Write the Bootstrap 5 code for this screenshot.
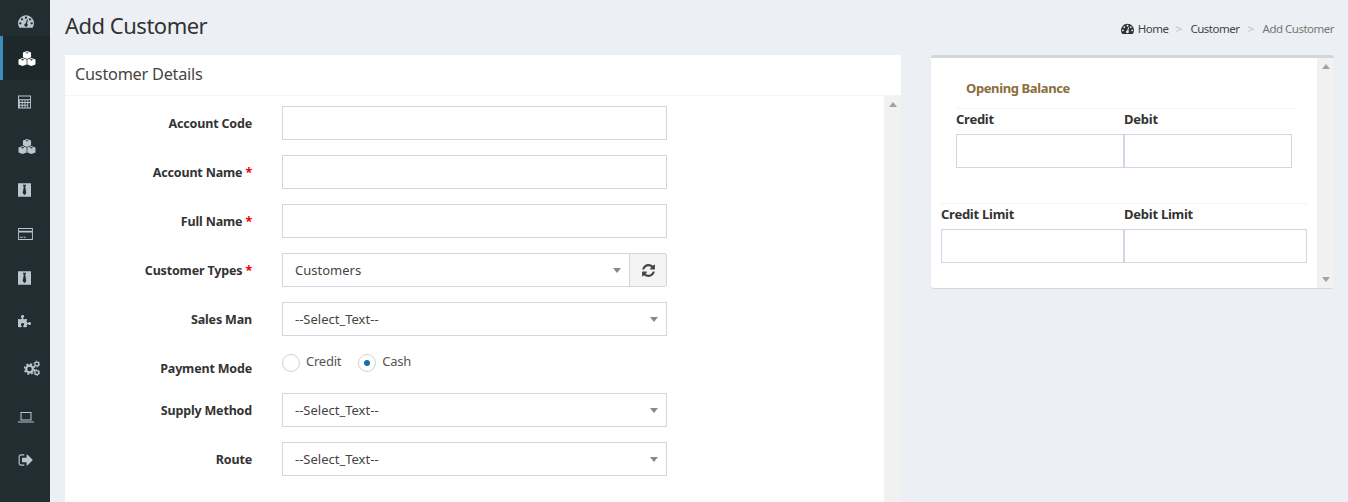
<!DOCTYPE html>
<html lang="en">
<head>
<meta charset="utf-8">
<title>Add Customer</title>
<link href="https://cdn.jsdelivr.net/npm/bootstrap@5.3.0/dist/css/bootstrap.min.css" rel="stylesheet">
<style>
html,body{height:502px;overflow:hidden}
body{background:#ecf0f5;color:#333;font-family:"Noto Sans","Liberation Sans",sans-serif;font-size:13px;letter-spacing:-.25px}
.side-rail{width:50px;height:502px;background:#222d32;flex:none}
.rail-item{height:44px;color:#b8c7ce;padding-left:15px;border-left:3px solid transparent}
.rail-item svg{width:16px;height:16px;fill:currentColor;display:block}
.rail-item svg.ic-cube{width:18px;height:15px}
.rail-item svg.ic-calc{width:13px;height:14px}
.rail-item svg.ic-tie{width:13px;height:14px}
.rail-item svg.ic-card{width:15px;height:12px}
.rail-item svg.ic-puz{width:14px;height:14px}
.rail-first{height:36px;padding-bottom:7px}
.rail-active{background:#1e282c;color:#fff;border-left-color:#3c8dbc}
.rail-cog{height:48px;padding-left:21px}
.rail-lap{height:46px;padding-top:3px}
.rail-out{height:44px}
.work-area{min-width:0;padding:0 14px 0 15px}
.head-bar{height:55px}
.page-title{font-size:22px;font-weight:400;margin:0;padding-bottom:5px;letter-spacing:-.5px}
.crumbs{margin:3px 0 0;font-size:11.5px;letter-spacing:-.5px;--bs-breadcrumb-divider:'>';--bs-breadcrumb-item-padding-x:7px;--bs-breadcrumb-margin-bottom:0}
.crumbs .breadcrumb-item+.breadcrumb-item::before{color:#bbb;padding-right:9px}
.crumbs .breadcrumb-item+.breadcrumb-item{padding-left:7px}
.crumbs .breadcrumb-item.active{color:#777;padding-left:8px}
.crumbs .breadcrumb-item{color:#444}
.crumbs svg{width:13px;height:13px;margin-right:4px;fill:#333;vertical-align:-2px}
.main-card{width:836px;height:447px;border:0;border-radius:3px 3px 0 0;background:#fff}
.main-head{height:41px;padding:0 10px;font-size:16.3px;color:#444;border-bottom:1px solid #f4f4f4;line-height:38px;background:#fff}
.main-body{height:406px}
.form-pane{flex:1;padding:10px 0 0}
.scroll-strip{width:17px;background:#f1f1f1;padding:6px 0;flex:none}
.tri-up{width:0;height:0;border:4px solid transparent;border-top:0;border-bottom:5px solid #a3a3a3}
.tri-down{width:0;height:0;border:4px solid transparent;border-bottom:0;border-top:5px solid #a3a3a3}
.field-line{height:34px;margin-bottom:15px}
.field-label{width:187px;text-align:right;font-weight:700;margin:0;padding-top:2px;font-size:12.5px;letter-spacing:-.17px;color:#333}
.field-label i{color:#e00;font-style:normal}
.field-box{width:385px;margin-left:30px}
.plain-input{height:34px;border:1px solid #d2d6e2;border-radius:0;padding:6px 12px;font-size:13px;box-shadow:none;letter-spacing:-.25px}
.plain-select{height:34px;border:1px solid #d2d6e2;border-radius:0;padding:0 12px;font-size:13px;color:#444;letter-spacing:0;background-image:none;line-height:32px;position:relative}
.plain-select::after{content:"";position:absolute;right:8px;top:14px;border:4.5px solid transparent;border-bottom:0;border-top:5px solid #888}
.refresh-btn{width:37px;height:34px;padding:0;border:1px solid #d2d6e2;border-left:0;background:#f4f4f4;border-radius:0 3px 3px 0}
.refresh-btn svg{width:15px;height:15px;fill:#444;display:block;margin:auto}
.pay-line{height:42px;margin-bottom:0}
.pay-line .field-label{padding-top:9px}
.pay-radios{gap:17px;margin-left:30px;height:42px}
.radio-item{display:flex;align-items:flex-start;gap:6px;margin:0;color:#555;line-height:20px}
.radio-dot{width:18px;height:18px;border:1px solid #d2d2d2;border-radius:50%;background:#fff;display:block;margin-top:3px;position:relative}
.radio-on::after{content:"";position:absolute;left:5px;top:5px;width:6px;height:6px;border-radius:50%;background:#1a6fa8}
.side-card{width:403px;height:233px;margin-left:30px;border:0;border-top:3px solid #d2d6de;border-radius:3px;background:#fff;box-shadow:0 1px 1px rgba(0,0,0,.1)}
.side-pane{flex:1;padding-top:20px}
.bal-title{color:#8a6d3b;font-weight:700;font-size:13px;letter-spacing:-.38px;padding:0 0 0 35px;height:30px;line-height:20px}
.rule-a{border-top:1px solid #f4f4f4;margin:0 23px 0 25px;height:26px;padding-top:0}
.rule-b{border-top:1px solid #f4f4f4;margin:35px 10px 0 10px;height:26px;padding-top:0}
.bal-head{font-weight:700;font-size:13px;line-height:20px;color:#333}
.w-168{width:168px}.w-183{width:183px}
.bal-inputs-a{margin-left:25px;width:336px}
.bal-inputs-b{margin-left:10px;width:366px}
</style>
</head>
<body>
<div class="d-flex">
  <nav class="side-rail d-flex flex-column">
    <div class="rail-item rail-first d-flex align-items-end"><svg viewBox="0 0 1792 1792"><use href="#ic-dash"/></svg></div>
    <div class="rail-item rail-active d-flex align-items-center"><svg class="ic-cube" viewBox="0 0 20 17"><use href="#ic-cubes"/></svg></div>
    <div class="rail-item d-flex align-items-center"><svg class="ic-calc" viewBox="1 1 14 14"><use href="#ic-calc"/></svg></div>
    <div class="rail-item d-flex align-items-center"><svg class="ic-cube" viewBox="0 0 20 17"><use href="#ic-cubes"/></svg></div>
    <div class="rail-item d-flex align-items-center"><svg class="ic-tie" viewBox="2 1 12 12.500"><use href="#ic-tie"/></svg></div>
    <div class="rail-item d-flex align-items-center"><svg class="ic-card" viewBox="0 1.500 16 13"><use href="#ic-card"/></svg></div>
    <div class="rail-item d-flex align-items-center"><svg class="ic-tie" viewBox="2 1 12 12.500"><use href="#ic-tie"/></svg></div>
    <div class="rail-item d-flex align-items-center"><svg class="ic-puz" viewBox="0 0 1792 1792"><use href="#ic-puzzle"/></svg></div>
    <div class="rail-item rail-cog d-flex align-items-center"><svg viewBox="0 0 16 16"><use href="#ic-cogs"/></svg></div>
    <div class="rail-item rail-lap d-flex align-items-center"><svg viewBox="0 0 16 16"><use href="#ic-lap"/></svg></div>
    <div class="rail-item rail-out d-flex align-items-center"><svg viewBox="0 0 1792 1792"><use href="#ic-out"/></svg></div>
  </nav>
  <div class="work-area flex-grow-1">
    <div class="head-bar d-flex justify-content-between align-items-center">
      <h1 class="page-title">Add Customer</h1>
      <ol class="breadcrumb crumbs">
        <li class="breadcrumb-item"><svg viewBox="0 0 1792 1792"><use href="#ic-dash"/></svg>Home</li>
        <li class="breadcrumb-item">Customer</li>
        <li class="breadcrumb-item active">Add Customer</li>
      </ol>
    </div>
    <div class="d-flex align-items-start">
      <div class="card main-card">
        <div class="main-head">Customer Details</div>
        <div class="main-body d-flex">
          <form class="form-pane">
            <div class="field-line d-flex align-items-center"><label class="field-label">Account Code</label><div class="field-box"><input class="form-control plain-input" type="text"></div></div>
            <div class="field-line d-flex align-items-center"><label class="field-label">Account Name <i>*</i></label><div class="field-box"><input class="form-control plain-input" type="text"></div></div>
            <div class="field-line d-flex align-items-center"><label class="field-label">Full Name <i>*</i></label><div class="field-box"><input class="form-control plain-input" type="text"></div></div>
            <div class="field-line d-flex align-items-center"><label class="field-label">Customer Types <i>*</i></label><div class="field-box d-flex"><div class="plain-select flex-grow-1">Customers</div><button type="button" class="refresh-btn"><svg viewBox="0 0 1792 1792"><use href="#ic-sync"/></svg></button></div></div>
            <div class="field-line d-flex align-items-center"><label class="field-label">Sales Man</label><div class="field-box"><div class="plain-select">--Select_Text--</div></div></div>
            <div class="field-line pay-line d-flex align-items-start"><label class="field-label">Payment Mode</label><div class="pay-radios d-flex align-items-start"><span class="radio-item"><span class="radio-dot"></span>Credit</span><span class="radio-item"><span class="radio-dot radio-on"></span>Cash</span></div></div>
            <div class="field-line d-flex align-items-center"><label class="field-label">Supply Method</label><div class="field-box"><div class="plain-select">--Select_Text--</div></div></div>
            <div class="field-line d-flex align-items-center"><label class="field-label">Route</label><div class="field-box"><div class="plain-select">--Select_Text--</div></div></div>
          </form>
          <div class="scroll-strip d-flex flex-column align-items-center"><span class="tri-up"></span></div>
        </div>
      </div>
      <div class="card side-card">
        <div class="d-flex h-100">
          <div class="side-pane">
            <div class="bal-title">Opening Balance</div>
            <div class="rule-a bal-head d-flex"><span class="w-168">Credit</span><span>Debit</span></div>
            <div class="d-flex bal-inputs-a"><input class="form-control plain-input w-50" type="text"><input class="form-control plain-input w-50" type="text"></div>
            <div class="rule-b bal-head d-flex"><span class="w-183">Credit Limit</span><span>Debit Limit</span></div>
            <div class="d-flex bal-inputs-b"><input class="form-control plain-input w-50" type="text"><input class="form-control plain-input w-50" type="text"></div>
          </div>
          <div class="scroll-strip d-flex flex-column align-items-center justify-content-between"><span class="tri-up"></span><span class="tri-down"></span></div>
        </div>
      </div>
    </div>
  </div>
</div>
<svg width="0" height="0" class="d-none">
  <defs>
    <path id="ic-dash" fill-rule="evenodd" d="M384 1152q0-53-37.5-90.5t-90.5-37.5-90.5 37.5-37.5 90.5 37.5 90.5 90.5 37.5 90.5-37.5 37.5-90.5zm192-448q0-53-37.5-90.5t-90.5-37.5-90.5 37.5-37.5 90.5 37.5 90.5 90.5 37.5 90.5-37.5 37.5-90.5zm428 481l101-382q6-26-7.5-48.5t-38.5-29.5-48 6.5-30 39.5l-101 382q-60 5-107 43.5t-63 98.5q-20 77 20 146t117 89 146-20 89-117q16-60-6-117t-72-91zm660-33q0-53-37.5-90.5t-90.5-37.5-90.5 37.5-37.5 90.5 37.5 90.5 90.5 37.5 90.5-37.5 37.5-90.5zm-640-640q0-53-37.5-90.5t-90.5-37.5-90.5 37.5-37.5 90.5 37.5 90.5 90.5 37.5 90.5-37.5 37.5-90.5zm448 192q0-53-37.5-90.5t-90.5-37.5-90.5 37.5-37.5 90.5 37.5 90.5 90.5 37.5 90.5-37.5 37.5-90.5zm320 448q0 261-141 483-19 29-54 29h-1402q-35 0-54-29-141-221-141-483 0-182 71-348t191-286 286-191 348-71 348 71 286 191 191 286 71 348z"/>
    <path id="ic-sync" d="M1639 1056q0 5-1 7-64 268-268 434.5t-478 166.5q-146 0-282.5-55t-243.5-157l-129 129q-19 19-45 19t-45-19-19-45v-448q0-26 19-45t45-19h448q26 0 45 19t19 45-19 45l-137 137q71 66 161 102t187 36q134 0 250-65t186-179q11-17 53-117 8-23 30-23h192q13 0 22.5 9.5t9.5 22.5zm25-800v448q0 26-19 45t-45 19h-448q-26 0-45-19t-19-45 19-45l138-138q-148-137-349-137-134 0-250 65t-186 179q-11 17-53 117-8 23-30 23h-199q-13 0-22.5-9.5t-9.5-22.5v-7q65-268 270-434.5t480-166.5q146 0 284 55.5t245 156.5l130-129q19-19 45-19t45 19 19 45z"/>
    <path id="ic-puzzle" d="M1664 1098q0 81-44.5 135t-123.5 54q-41 0-77.5-17.5t-59-38-56.5-38-71-17.5q-110 0-110 124 0 39 16 115t15 115v5q-22 0-33 1-34 3-97.5 11.5t-115.5 13.5-98 5q-61 0-103-26.5t-42-83.5q0-37 17.5-71t38-56.5 38-59 17.5-77.5q0-79-54-123.5t-135-44.5q-84 0-143 45.5t-59 127.5q0 43 15 83t33.5 64.5 33.5 53 15 50.5q0 45-46 89-37 35-117 35-95 0-245-24-9-2-27.5-4t-27.5-4l-13-2q-1 0-3-1-2 0-2-1v-1024q2 1 17.5 3.5t34 5 21.5 3.5q150 24 245 24 80 0 117-35 46-44 46-89 0-22-15-50.5t-33.5-53-33.5-64.5-15-83q0-82 59-127.5t144-45.5q80 0 134 44.5t54 123.5q0 41-17.5 77.5t-38 59-38 56.5-17.5 71q0 57 42 83.5t103 26.5q64 0 180-15t163-17v2q-1 2-3.5 17.5t-5 34-3.5 21.5q-24 150-24 245 0 80 35 117 44 46 89 46 22 0 50.5-15t53-33.5 64.5-33.5 83-15q82 0 127.5 59t45.5 143z"/>
    <path id="ic-out" d="M704 1440q0 4 1 20t.5 26.5-3 23.5-10 19.5-20.5 6.5h-320q-119 0-203.5-84.5t-84.5-203.5v-704q0-119 84.5-203.5t203.5-84.5h320q13 0 22.5 9.5t9.5 22.5q0 4 1 20t.5 26.5-3 23.5-10 19.5-20.5 6.5h-320q-66 0-113 47t-47 113v704q0 66 47 113t113 47h312l11.5 1 11.5 3 8 5.5 7 9 2 13.5zm928-544q0 26-19 45l-544 544q-19 19-45 19t-45-19-19-45v-288h-448q-26 0-45-19t-19-45v-384q0-26 19-45t45-19h448v-288q0-26 19-45t45-19 45 19l544 544q19 19 19 45z"/>
    <g id="ic-cubes"><path d="M10 0l4.600 1.700v5.500L10 9 5.400 7.200V1.700z"/><path d="M5 7.800l4.600 1.800v5.600L5 17 .4 15.200V9.600z"/><path d="M15 7.800l4.600 1.800v5.600L15 17l-4.600-1.800V9.600z"/><path fill="#222d32" d="M8 2.100l2 .8 2-.8-2-.8zM3 10l2 .8 2-.8-2-.8zM13 10l2 .8 2-.8-2-.8z"/></g>
    <path id="ic-calc" fill-rule="evenodd" d="M1 1h14v14H1zM2 2v3h12V2zM3 6v2h2V6zm3 0v2h2V6zm3 0v2h2V6zm3 0v2h2V6zM3 9v2h2V9zm3 0v2h2V9zm3 0v2h2V9zm3 0v5h2V9zM3 12v2h2v-2zm3 0v2h2v-2zm3 0v2h2v-2z"/>
    <path id="ic-tie" fill-rule="evenodd" d="M2 1h12v12.500H2zM6.500 2.500L7.300 4.500 6.300 10 8 12l1.700-2-1-5.500.8-2z"/>
    <path id="ic-card" fill-rule="evenodd" d="M0 1.500h16v13H0zM1 2.500v2h14v-2zM1 6.500v7h14v-7zM2 11h3v1H2zm4 0h2v1H6z"/>
    <g id="ic-cogs"><circle cx="5.500" cy="9" r="3.300" fill="none" stroke="currentColor" stroke-width="2.200"/><circle cx="5.500" cy="9" r="4.900" fill="none" stroke="currentColor" stroke-width="1.800" stroke-dasharray="2 1.850"/><circle cx="12.800" cy="4" r="1.900" fill="none" stroke="currentColor" stroke-width="1.300"/><circle cx="12.800" cy="4" r="2.900" fill="none" stroke="currentColor" stroke-width="1" stroke-dasharray="1.500 1.540"/><circle cx="12.800" cy="12.500" r="1.900" fill="none" stroke="currentColor" stroke-width="1.300"/><circle cx="12.800" cy="12.500" r="2.900" fill="none" stroke="currentColor" stroke-width="1" stroke-dasharray="1.500 1.540"/></g>
    <path id="ic-lap" fill-rule="evenodd" d="M2.500 3h11v8.500h-11zM3.500 4v6.500h9V4zM0 12.500h16v1H0z"/>
  </defs>
</svg>
<script src="https://cdn.jsdelivr.net/npm/bootstrap@5.3.0/dist/js/bootstrap.bundle.min.js"></script>
</body>
</html>
